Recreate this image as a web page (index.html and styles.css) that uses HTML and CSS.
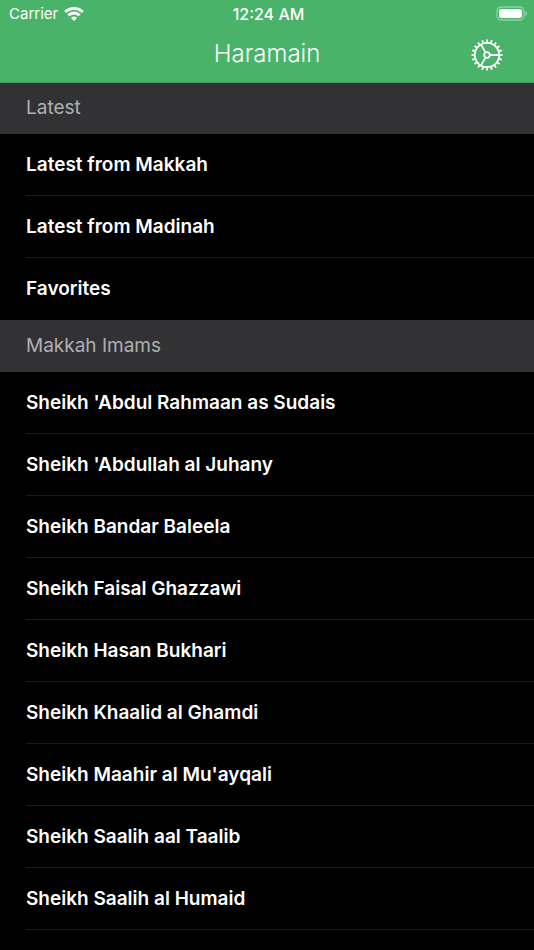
FILE: index.html
```html
<!DOCTYPE html>
<html lang="en">
<head>
    <meta charset="UTF-8">
    <meta name="viewport" content="width=device-width, initial-scale=1.0">
    <title>Haramain</title>
    <link rel="stylesheet" href="styles.css">
</head>
<body>
    <header class="top">
        <div class="status-bar">
            <div class="carrier">
                <span>Carrier</span>
                <svg class="wifi" viewBox="0 0 20 16" aria-hidden="true">
                    <path d="M1.2 6a12.500 12.500 0 0 1 17.600 0" />
                    <path d="M4.400 9.300a8 8 0 0 1 11.200 0" />
                    <path class="wifi-dot" d="M10 15 7 12a4.400 4.400 0 0 1 6 0z" />
                </svg>
            </div>
            <span class="time">12:24 AM</span>
            <svg class="battery" viewBox="0 0 32 16" aria-hidden="true">
                <rect class="battery-case" x="1" y="1" width="27" height="13" rx="4" />
                <rect class="battery-level" x="3" y="3" width="23" height="9" rx="2" />
                <path class="battery-tip" d="M29.500 5v5q1.600-.7 1.600-2.500t-1.600-2.500z" />
            </svg>
        </div>
        <div class="nav-bar">
            <h1>Haramain</h1>
            <button class="settings" type="button" aria-label="Settings">
                <svg viewBox="0 0 32 32" aria-hidden="true">
                    <circle class="gear-teeth" cx="16" cy="16" r="14" pathLength="100" />
                    <circle class="gear-ring" cx="16" cy="16" r="12.200" />
                    <circle class="gear-hub" cx="16" cy="16" r="2.800" />
                    <path class="gear-spokes" d="M19 16h9M14.500 13.400 10 5.600M14.500 18.600 10 26.400" />
                </svg>
            </button>
        </div>
    </header>

    <main>
        <section>
            <h2>Latest</h2>
            <ul>
                <li><a href="#">Latest from Makkah</a></li>
                <li><a href="#">Latest from Madinah</a></li>
                <li><a href="#">Favorites</a></li>
            </ul>
        </section>

        <section>
            <h2>Makkah Imams</h2>
            <ul class="imams">
                <li><a href="#">Sheikh 'Abdul Rahmaan as Sudais</a></li>
                <li><a href="#">Sheikh 'Abdullah al Juhany</a></li>
                <li><a href="#">Sheikh Bandar Baleela</a></li>
                <li><a href="#">Sheikh Faisal Ghazzawi</a></li>
                <li><a href="#">Sheikh Hasan Bukhari</a></li>
                <li><a href="#">Sheikh Khaalid al Ghamdi</a></li>
                <li><a href="#">Sheikh Maahir al Mu'ayqali</a></li>
                <li><a href="#">Sheikh Saalih aal Taalib</a></li>
                <li><a href="#">Sheikh Saalih al Humaid</a></li>
            </ul>
        </section>
    </main>
</body>
</html>
```
FILE: styles.css
```css
* {
    box-sizing: border-box;
}

body {
    margin: 0;
    background-color: #000;
    color: #fff;
    font-family: Inter, "Liberation Sans", sans-serif;
}

.top {
    position: relative;
    background-color: #49b369;
    box-shadow: 0 1px #439f5f;
}

.status-bar {
    display: grid;
    grid-template-columns: 1fr auto 1fr;
    align-items: center;
    height: 27px;
    padding: 0 6px 0 9px;
    font-size: 15px;
}

.carrier {
    display: flex;
    align-items: center;
    gap: 6px;
}

.wifi {
    width: 20px;
    height: 16px;
    fill: none;
    stroke: #fff;
    stroke-width: 3;
}

.wifi .wifi-dot {
    fill: #fff;
    stroke: none;
}

.time {
    font-size: 16px;
    font-weight: 500;
}

.battery {
    width: 32px;
    height: 16px;
    justify-self: end;
}

.battery-case {
    fill: none;
    stroke: #fff;
    stroke-opacity: 0.4;
    stroke-width: 1.3;
}

.battery-level {
    fill: #fff;
}

.battery-tip {
    fill: #fff;
    fill-opacity: 0.45;
}

.nav-bar {
    display: grid;
    grid-template-columns: 1fr auto 1fr;
    align-items: center;
    height: 55px;
    padding: 0 31px;
}

h1 {
    grid-column: 2;
    margin: 0;
    padding-bottom: 2px;
    font-size: 24px;
    font-weight: 300;
}

.settings {
    justify-self: end;
    width: 32px;
    height: 32px;
    padding: 0;
    border: none;
    background: none;
    cursor: pointer;
}

.settings svg {
    display: block;
    fill: none;
    stroke: #fff;
}

.gear-teeth {
    stroke-width: 3;
    stroke-dasharray: 2 3;
    stroke-dashoffset: 1;
}

.gear-ring {
    stroke-width: 1.8;
}

.gear-hub,
.gear-spokes {
    stroke-width: 1.8;
}

h2 {
    margin: 0;
    padding: 0 26px;
    background-color: #323234;
    color: #b0b0b2;
    font-size: 19px;
    font-weight: 400;
    line-height: 52px;
}

ul {
    margin: 0;
    padding: 0 0 0 26px;
    list-style: none;
}

li {
    border-bottom: 1px solid #1c1c1e;
}

li:last-child {
    border-bottom-color: transparent;
}

.imams li:last-child {
    border-bottom-color: #1c1c1e;
}

li a {
    display: block;
    color: #fff;
    font-size: 19px;
    font-weight: 600;
    line-height: 61px;
    text-decoration: none;
}
```
